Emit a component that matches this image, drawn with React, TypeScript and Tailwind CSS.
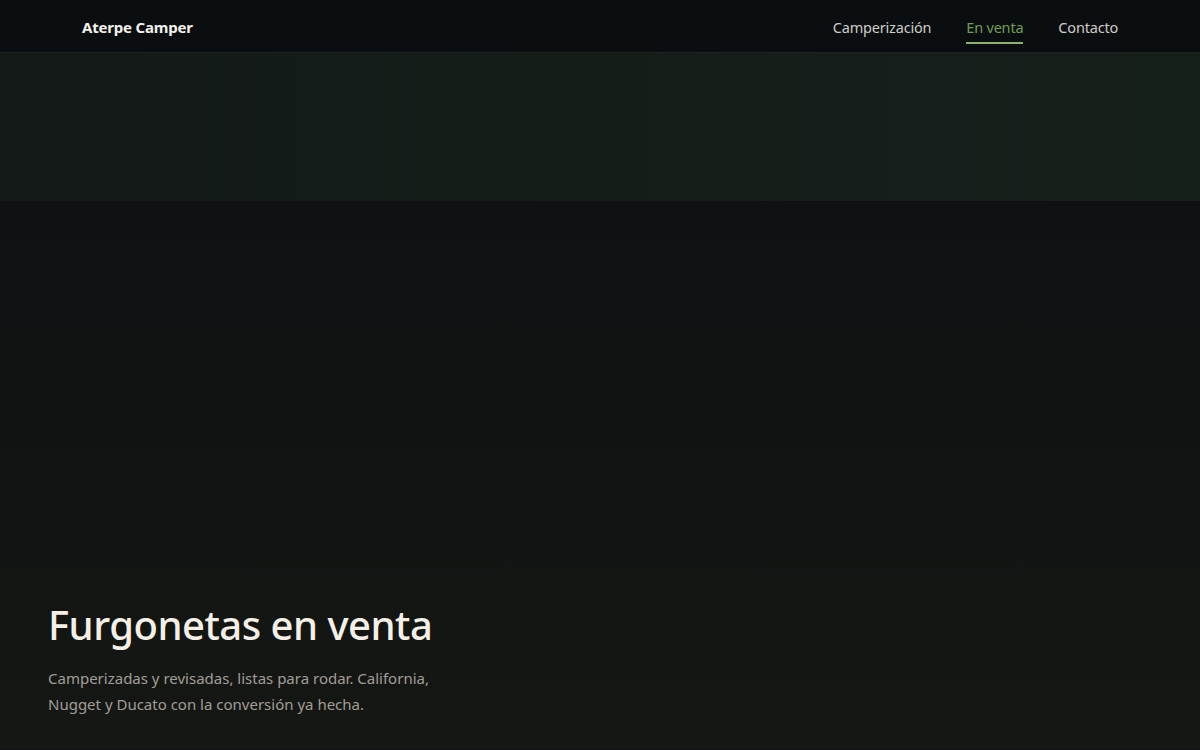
export default function App() {
  const links = [
    { label: "Camperización", active: false },
    { label: "En venta", active: true },
    { label: "Contacto", active: false },
  ];
  return (
    <div
      className="min-h-screen bg-[#101213] text-[#f2efe8]"
      style={{ fontFamily: '"Noto Sans", "Open Sans", sans-serif' }}
    >
      <header className="h-[53px] bg-[#0b0e11] border-b border-[#1c2320] flex items-center justify-between px-[82px]">
        <a className="text-[15px] font-bold text-[#f4f1ea] tracking-[-0.2px] pt-[2px]">Aterpe Camper</a>
        <nav className="flex items-center gap-[35px] pt-[2px]">
          {links.map((l) => (
            <a
              key={l.label}
              className={
                l.active
                  ? "text-[14.5px] text-[#6f9f52] pt-[7px] pb-[4px] border-b-2 border-[#8fb26e] tracking-[-0.2px]"
                  : "text-[14.5px] text-[#cfccc5] pt-[7px] pb-[4px] border-b-2 border-transparent tracking-[-0.2px]"
              }
            >
              {l.label}
            </a>
          ))}
        </nav>
      </header>

      <section className="h-[148px] bg-gradient-to-r from-[#131a17] via-[#151d19] to-[#16201b]" />

      <section className="h-[548px] bg-gradient-to-b from-[#0f1113] via-[#121413] to-[#151714] flex flex-col justify-end px-12 pb-[32px]">
        <h1 className="text-[40px] leading-[48px] font-medium text-[#f4f0e6] tracking-[-0.5px]">
          Furgonetas en venta
        </h1>
        <p className="mt-[16px] max-w-[390px] text-[15px] leading-[26px] text-[#a29e96]">
          Camperizadas y revisadas, listas para rodar. California, Nugget y Ducato con la conversión ya hecha.
        </p>
      </section>
    </div>
  );
}
